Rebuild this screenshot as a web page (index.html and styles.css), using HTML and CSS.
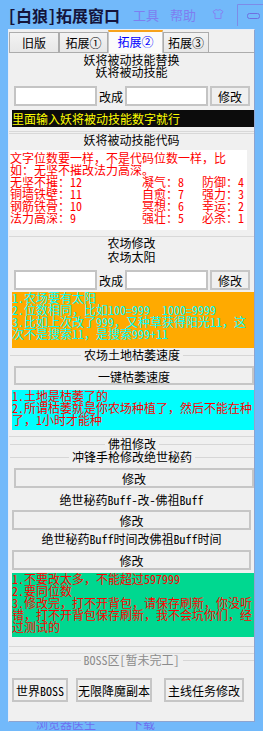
FILE: index.html
```html
<!DOCTYPE html>
<html lang="zh-CN">
<head>
    <meta charset="UTF-8">
    <meta name="viewport" content="width=device-width, initial-scale=1.0">
    <title>[白狼]拓展窗口</title>
    <link rel="stylesheet" href="styles.css">
</head>
<body>
    <div class="titlebar">
        <span class="title">[白狼]拓展窗口</span>
        <span class="ghost ghost-first">工具</span>
        <span class="ghost">帮助</span>
        <svg class="ghost-shirt" width="12" height="10" viewBox="0 0 12 10">
            <path d="M1 2.5 L4 0.5 Q6 2.2 8 0.5 L11 2.5 L10 4.5 L9 4 L9 9.5 L3 9.5 L3 4 L2 4.5 Z" fill="none" stroke="#8585f2" stroke-width="1"/>
        </svg>
        <svg class="ghost-box" width="36" height="23" viewBox="0 0 36 23">
            <path d="M0.5 23 V1.5 H36" fill="none" stroke="#7d8be8" stroke-width="1"/>
            <rect x="10.5" y="10.5" width="12" height="5" rx="2" fill="none" stroke="#6f6fe0" stroke-width="1"/>
        </svg>
    </div>

    <div class="window">
        <div class="tabs">
            <div class="tab tab-1">旧版</div>
            <div class="tab tab-2">拓展①</div>
            <div class="tab tab-3 active">拓展②</div>
            <div class="tab tab-4">拓展③</div>
        </div>

        <div class="panel">
            <!-- 妖将被动技能 -->
            <div class="caption first">妖将被动技能替换</div>
            <div class="caption">妖将被动技能</div>
            <div class="edit-row row-skill">
                <input class="field" type="text">
                <span class="to">改成</span>
                <input class="field" type="text">
                <button class="btn btn-small">修改</button>
            </div>
            <div class="tip tip-black">里面输入妖将被动技能数字就行</div>
            <div class="rule rule-a"></div>
            <div class="rule rule-b"></div>

            <div class="caption">妖将被动技能代码</div>
            <div class="code-box">
                <div class="code-note">文字位数要一样，不是代码位数一样，比<br>如：无坚不摧改法力高深。</div>
                <div class="code-row"><span>无坚不摧：12</span><span>凝气：8</span><span>防御：4</span></div>
                <div class="code-row"><span>铜墙铁壁：11</span><span>自愈：7</span><span>强力：3</span></div>
                <div class="code-row"><span>钢筋铁骨：10</span><span>冥想：6</span><span>幸运：2</span></div>
                <div class="code-row"><span>法力高深：9</span><span>强壮：5</span><span>必杀：1</span></div>
            </div>

            <!-- 农场 -->
            <div class="rule rule-farm"></div>
            <div class="caption">农场修改</div>
            <div class="caption sub">农场太阳</div>
            <div class="edit-row row-farm">
                <input class="field" type="text">
                <span class="to">改成</span>
                <input class="field" type="text">
                <button class="btn btn-small">修改</button>
            </div>
            <div class="tip tip-orange">1.农场要有太阳<br>2.位数相同，比如100=999&nbsp;&nbsp;1000=9999<br>3.比如上次改了999，又种草获得阳光11，这<br>次不是搜索11，是搜索999+11</div>

            <div class="legend legend-wither">农场土地枯萎速度</div>
            <button class="btn btn-wide btn-wither">一键枯萎速度</button>
            <div class="tip tip-cyan">1.土地是枯萎了的<br>2.所谓枯萎就是你农场种植了，然后不能在种<br>了，1小时才能种</div>
            <div class="rule rule-wither"></div>

            <!-- 佛祖 -->
            <div class="legend legend-fozu">佛祖修改</div>
            <div class="legend legend-fozu">冲锋手枪修改绝世秘药</div>
            <button class="btn btn-wide btn-gun">修改</button>
            <div class="caption cap-buff">绝世秘药Buff-改-佛祖Buff</div>
            <button class="btn btn-buff">修改</button>
            <div class="caption cap-time">绝世秘药Buff时间改佛祖Buff时间</div>
            <button class="btn btn-buff btn-time">修改</button>
            <div class="tip tip-green">1.不要改太多，不能超过597999<br>2.要同位数<br>3.修改完，打不开背包，请保存刷新，你没听<br>错，打不开背包保存刷新，我不会坑你们，经<br>过测试的</div>

            <!-- BOSS -->
            <div class="rule rule-boss1"></div>
            <div class="rule rule-boss2"></div>
            <div class="legend legend-boss">BOSS区[暂未完工]</div>
            <div class="boss-row">
                <button class="btn btn-boss boss-1">世界BOSS</button>
                <button class="btn btn-boss boss-2">无限降魔副本</button>
                <button class="btn btn-boss boss-3">主线任务修改</button>
            </div>
        </div>
    </div>

    <div class="footer">
        <span>浏览器医生</span>
        <span>下载</span>
    </div>
</body>
</html>
```

FILE: styles.css
```css
* {
    box-sizing: border-box;
}
body {
    margin: 0;
    width: 263px;
    height: 731px;
    overflow: hidden;
    background: #72b9fa;
    font-family: "Noto Sans Mono CJK SC", "Noto Sans CJK SC", sans-serif;
    font-size: 12px;
    color: #000;
}

/* barra de titulo */
.titlebar {
    height: 29px;
    display: flex;
    align-items: center;
    padding-left: 8px;
    white-space: nowrap;
    overflow: hidden;
}
.titlebar > * {
    flex-shrink: 0;
}
.title {
    font-size: 16px;
    font-weight: bold;
    line-height: 18px;
    color: #14143c;
    margin-top: 1px;
}
.ghost {
    font-size: 13px;
    line-height: 16px;
    color: #7e7ef0;
    margin-left: 11px;
}
.ghost-first {
    margin-left: 13px;
}
.ghost-shirt {
    margin-left: 16px;
    margin-top: -2px;
}
.ghost-box {
    margin-left: 13px;
}

/* janela */
.window {
    margin: 0 8px;
    height: 693px;
    background: #f0f0f0;
    border: 1px solid #8da4d0;
    border-top-color: #e6edf9;
    border-left-color: #e6edf9;
    overflow: hidden;
}
.tabs {
    display: flex;
    align-items: flex-end;
    height: 22px;
}
.tab {
    position: relative;
    height: 20px;
    border: 1px solid #acacac;
    border-bottom: none;
    background: linear-gradient(#f3f3f3, #e7e7e7);
    text-align: center;
    line-height: 19px;
}
.tab-1 { width: 50px; }
.tab-2 { width: 49px; }
.tab-3 { width: 55px; }
.tab-4 { width: 46px; }
.tab.active {
    height: 23px;
    margin-bottom: -1px;
    border-top: 2px solid #f7a21b;
    border-color: #f7a21b #c8c8c8 #c8c8c8 #c8c8c8;
    background: #fbfbfb;
    color: #0000ff;
    line-height: 20px;
}
.panel {
    border-top: 1px solid #acacac;
}

/* textos */
.caption {
    height: 12px;
    line-height: 12px;
    text-align: center;
    white-space: nowrap;
}
.caption.first {
    margin-top: 1px;
}
.caption.sub {
    margin-top: 2px;
}
.legend {
    display: flex;
    align-items: center;
    gap: 3px;
    height: 12px;
    line-height: 12px;
    white-space: nowrap;
}
.legend::before,
.legend::after {
    content: "";
    flex: 1;
    border-top: 1px solid #d6d6d6;
}
.legend-wither {
    margin-top: 1px;
    padding-left: 1px;
}
.legend-fozu {
    margin-top: 1px;
    padding-left: 1px;
}
.legend-boss {
    color: #8c8c8c;
}
.rule {
    border-top: 1px solid #d8d8d8;
}
.rule-a { margin-top: 4px; }
.rule-b { margin-top: 1px; }
.rule-farm { margin-top: 6px; }
.rule-wither { margin-top: 6px; }
.rule-boss1 { margin-top: 9px; }
.rule-boss2 { margin-top: 6px; }

/* campos e botoes */
.edit-row {
    display: flex;
    align-items: center;
    height: 20px;
    padding-left: 5px;
}
.row-skill {
    margin-top: 8px;
}
.row-farm {
    margin-top: 7px;
}
.field {
    width: 83px;
    height: 20px;
    padding: 0;
    border: 2px solid #c4c4c4;
    background: #fff;
}
.to {
    width: 28px;
    text-align: center;
}
.btn {
    display: block;
    height: 20px;
    padding: 0;
    font: inherit;
    color: #000;
    background: #f0f0f0;
    border: 2px solid #c6c6c6;
    white-space: nowrap;
}
.btn-small {
    width: 40px;
    margin-left: 2px;
}
.btn-wide {
    width: 240px;
    margin-left: 5px;
}
.btn-wither {
    height: 19px;
    margin-top: 5px;
}
.btn-gun {
    margin-top: 5px;
}
.cap-buff {
    margin-top: 6px;
}
.btn-buff {
    width: 239px;
    margin: 4px 0 0 3px;
}
.cap-time {
    margin-top: 3px;
}
.btn-time {
    margin-top: 5px;
}
.boss-row {
    display: flex;
    margin-top: 12px;
    padding-left: 3px;
}
.btn-boss {
    height: 24px;
}
.boss-1 { width: 56px; }
.boss-2 { width: 76px; margin-left: 8px; }
.boss-3 { width: 80px; margin-left: 12px; }

/* caixas de aviso */
.tip {
    margin-left: 3px;
    line-height: 12px;
    white-space: nowrap;
}
.tip-black {
    margin-top: 4px;
    height: 17px;
    line-height: 17px;
    background: #0c0c0c;
    color: #ffff00;
}
.tip-orange {
    margin-top: 2px;
    height: 56px;
    background: #ffaa00;
    color: #00ffff;
}
.tip-cyan {
    margin-top: 5px;
    height: 40px;
    background: #00ffff;
    color: #ff0000;
}
.tip-green {
    margin-top: 3px;
    height: 64px;
    background: #00d890;
    color: #ff0000;
}
.code-box {
    margin: 4px 0 0 1px;
    width: 237px;
    height: 80px;
    padding-top: 2px;
    background: #fff;
    color: #ff0000;
    line-height: 12px;
    white-space: nowrap;
}
.code-row {
    display: grid;
    grid-template-columns: 132px 60px 1fr;
}

/* rodape */
.footer {
    height: 9px;
    overflow: hidden;
    display: flex;
    gap: 35px;
    padding-left: 36px;
    font-size: 12px;
    line-height: 4px;
    color: #6f6ff0;
}
```
